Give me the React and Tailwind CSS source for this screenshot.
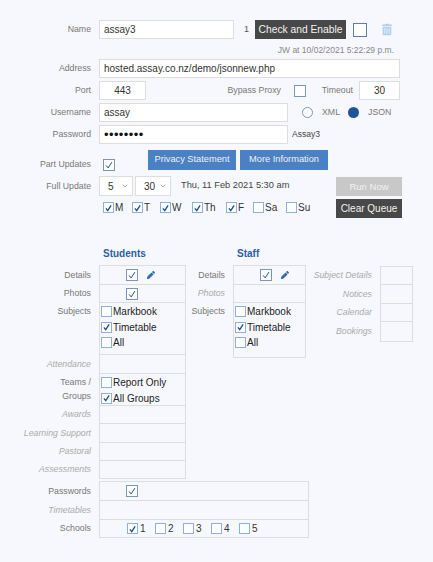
import { ChevronDown } from 'lucide-react';
import { FaPen, FaTrashAlt } from 'react-icons/fa';

const Check = ({ on = false, plain = false, className = '' }) => (
  <span
    className={`inline-flex shrink-0 items-center justify-center bg-white border ${
      plain ? 'w-[12px] h-[12px] border-[#7d94b5]' : 'w-[11px] h-[11px] border-[#8fb0dc]'
    } ${className}`}
  >
    {on && (
      <svg viewBox="0 0 12 12" className="w-[10px] h-[10px]" fill="none" stroke="#1f4f8a" strokeWidth={plain ? 1.2 : 1.8}>
        <path d="M2.5 6.5 L5 9.5 L9.5 2.5" />
      </svg>
    )}
  </span>
);

const Label = ({ children, muted, className = 'w-[91px]' }) => (
  <div className={`shrink-0 text-right text-[8.75px] ${muted ? 'italic text-[#aaaaaa]' : 'text-[#777777]'} ${className}`}>
    {children}
  </div>
);

const Input = ({ value, className = '', center }) => (
  <div className={`h-[19px] flex items-center bg-white border border-[#dddddd] text-[10px] text-[#333333] ${center ? 'justify-center' : 'px-[4px]'} ${className}`}>
    {value}
  </div>
);

const Button = ({ children, className = '' }) => (
  <button className={`flex items-center justify-center text-[#f2f2f2] ${className}`}>{children}</button>
);

const Select = ({ value, className }) => (
  <div className={`h-[20px] flex items-center justify-between pl-[8px] pr-[3px] bg-white border border-[#dddddd] text-[10px] text-[#333333] ${className}`}>
    {value}
    <ChevronDown className="w-[8px] h-[8px] text-[#777777]" />
  </div>
);

const Day = ({ label, on, className }) => (
  <div className={`flex items-center gap-[1px] text-[10px] text-[#333333] ${className}`}>
    <Check on={on} />
    {label}
  </div>
);

const CheckLine = ({ label, on }) => (
  <div className="h-[15.5px] flex items-center gap-[1px] text-[10px] text-[#222222]">
    <Check on={on} />
    {label}
  </div>
);

// one labelled row of a permissions table, rows share their border
const PermRow = ({ label, muted, h = 'h-[18px]', width, labelWidth, top, children }) => (
  <div className="flex items-start -mb-px">
    <div className={`${h} ${labelWidth} shrink-0 flex ${top ? 'items-start pt-[2px] leading-[14px]' : 'items-center'} justify-end`}>
      <Label muted={muted} className="w-auto">{label}</Label>
    </div>
    <div className={`${h} ${width} ml-[8px] shrink-0 border border-[#dddddd] ${top ? 'pl-[1px] pt-[1px]' : 'flex items-center'}`}>
      {children}
    </div>
  </div>
);

const DetailsCell = ({ pen }) => (
  <>
    <Check on plain className="ml-[26px]" />
    {pen && <FaPen className="ml-[9px] w-[8px] h-[8px] text-[#2e6db4]" />}
  </>
);

export default function App() {
  return (
    <div className="w-[433px] h-[562px] overflow-hidden bg-[#f7f8fd] pt-[20px] text-[10px] font-['Liberation_Sans',sans-serif]">
      <div className="flex items-center">
        <Label>Name</Label>
        <Input value="assay3" className="ml-[8px] w-[135px]" />
        <span className="ml-[10px] w-[5px] text-[9px] text-[#555555]">1</span>
        <Button className="ml-[6px] w-[91px] h-[19px] bg-[#484848] text-[10.25px]">Check and Enable</Button>
        <span className="ml-[7px] w-[14px] h-[14px] bg-white border border-[#5e7ea6]" />
        <FaTrashAlt className="ml-[15px] w-[10px] h-[13px] text-[#b4cfee]" />
      </div>
      <div className="mt-[5px] mr-[39px] h-[12px] text-right text-[8.5px] leading-[12px] text-[#888888]">JW at 10/02/2021 5:22:29 p.m.</div>

      <div className="mt-[3px] flex items-center">
        <Label>Address</Label>
        <Input value="hosted.assay.co.nz/demo/jsonnew.php" className="ml-[8px] w-[301px]" />
      </div>

      <div className="mt-[3px] flex items-center">
        <Label>Port</Label>
        <Input value="443" center className="ml-[8px] w-[47px]" />
        <Label className="w-[135px]">Bypass Proxy</Label>
        <Check plain className="ml-[13px]" />
        <Label className="ml-[15px] w-[32px]">Timeout</Label>
        <Input value="30" center className="ml-[6px] w-[41px]" />
      </div>

      <div className="mt-[3px] flex items-center">
        <Label>Username</Label>
        <Input value="assay" className="ml-[8px] w-[189px]" />
        <span className="ml-[14px] w-[11px] h-[11px] rounded-full bg-white border border-[#7d94b5]" />
        <Label className="ml-[9px] w-[16px]">XML</Label>
        <span className="ml-[10px] w-[11px] h-[11px] rounded-full bg-[#1f5596]" />
        <Label className="ml-[9px] w-[21px]">JSON</Label>
      </div>

      <div className="mt-[3px] flex items-center">
        <Label>Password</Label>
        <Input value="••••••••" className="ml-[8px] w-[189px] !text-[13px] tracking-[0.4px] !text-[#111111]" />
        <span className="ml-[4px] text-[8.5px] text-[#444444]">Assay3</span>
      </div>

      <div className="mt-[6px] flex items-start">
        <div className="mt-[8px] flex items-center">
          <Label>Part Updates</Label>
          <Check on plain className="ml-[12px]" />
        </div>
        <Button className="ml-[33px] w-[88px] h-[20px] bg-[#4a80c4] text-[9.25px]">Privacy Statement</Button>
        <Button className="ml-[4px] w-[88px] h-[20px] bg-[#4a80c4] text-[9.25px]">More Information</Button>
      </div>

      <div className="mt-[5px] flex">
        <div className="w-[336px] shrink-0">
          <div className="flex items-center">
            <Label>Full Update</Label>
            <Select value="5" className="ml-[8px] w-[34px]" />
            <Select value="30" className="ml-[2px] w-[36px]" />
            <span className="ml-[10px] text-[9.25px] text-[#444444]">Thu, 11 Feb 2021 5:30 am</span>
          </div>
          <div className="mt-[4px] ml-[103px] flex items-center">
            <Day label="M" on className="w-[29px]" />
            <Day label="T" on className="w-[28px]" />
            <Day label="W" on className="w-[32px]" />
            <Day label="Th" on className="w-[34px]" />
            <Day label="F" on className="w-[27px]" />
            <Day label="Sa" className="w-[33px]" />
            <Day label="Su" />
          </div>
        </div>
        <div className="pt-[1px] flex flex-col gap-[3px] shrink-0">
          <Button className="w-[66px] h-[19px] bg-[#c8c8c8] text-[9.5px]">Run Now</Button>
          <Button className="w-[66px] h-[19px] bg-[#484848] text-[10px]">Clear Queue</Button>
        </div>
      </div>

      <div className="mt-[28px] flex items-start">
        <div className="w-[187px] shrink-0">
          <div className="h-[19px] ml-[103px] font-bold text-[10px] text-[#2b5ea8]">Students</div>
          <PermRow label="Details" labelWidth="w-[91px]" width="w-[87px]" h="h-[20px]"><DetailsCell pen /></PermRow>
          <PermRow label="Photos" labelWidth="w-[91px]" width="w-[87px]" h="h-[19px]"><DetailsCell /></PermRow>
          <PermRow label="Subjects" labelWidth="w-[91px]" width="w-[87px]" h="h-[53px]" top>
            <CheckLine label="Markbook" />
            <CheckLine label="Timetable" on />
            <CheckLine label="All" />
          </PermRow>
          <PermRow label="Attendance" muted labelWidth="w-[91px]" width="w-[87px]" h="h-[20px]" />
          <PermRow label={<>Teams /<br />Groups</>} labelWidth="w-[91px]" width="w-[87px]" h="h-[33px]" top>
            <CheckLine label="Report Only" />
            <CheckLine label="All Groups" on />
          </PermRow>
          <PermRow label="Awards" muted labelWidth="w-[91px]" width="w-[87px]" h="h-[19px]" />
          <PermRow label="Learning Support" muted labelWidth="w-[91px]" width="w-[87px]" h="h-[20px]" />
          <PermRow label="Pastoral" muted labelWidth="w-[91px]" width="w-[87px]" h="h-[19px]" />
          <PermRow label="Assessments" muted labelWidth="w-[91px]" width="w-[87px]" h="h-[19px]" />
        </div>
        <div className="w-[120px] shrink-0">
          <div className="h-[19px] ml-[50px] font-bold text-[10px] text-[#2b5ea8]">Staff</div>
          <PermRow label="Details" labelWidth="w-[38px]" width="w-[73px]" h="h-[20px]"><DetailsCell pen /></PermRow>
          <PermRow label="Photos" muted labelWidth="w-[38px]" width="w-[73px]" h="h-[19px]" />
          <PermRow label="Subjects" labelWidth="w-[38px]" width="w-[73px]" h="h-[56px]" top>
            <CheckLine label="Markbook" />
            <CheckLine label="Timetable" on />
            <CheckLine label="All" />
          </PermRow>
        </div>
        <div className="shrink-0 pt-[20px]">
          <PermRow label="Subject Details" muted labelWidth="w-[65px]" width="w-[33px]" h="h-[19px]" />
          <PermRow label="Notices" muted labelWidth="w-[65px]" width="w-[33px]" h="h-[20px]" />
          <PermRow label="Calendar" muted labelWidth="w-[65px]" width="w-[33px]" h="h-[19px]" />
          <PermRow label="Bookings" muted labelWidth="w-[65px]" width="w-[33px]" h="h-[21px]" />
        </div>
      </div>

      <div className="mt-[3px]">
        <PermRow label="Passwords" labelWidth="w-[91px]" width="w-[210px]" h="h-[20px]"><DetailsCell /></PermRow>
        <PermRow label="Timetables" muted labelWidth="w-[91px]" width="w-[210px]" h="h-[20px]" />
        <PermRow label="Schools" labelWidth="w-[91px]" width="w-[210px]" h="h-[19px]">
          <div className="ml-[27px] flex items-center">
            <Day label="1" on className="w-[28px] gap-[2px]" />
            <Day label="2" className="w-[28px] gap-[2px]" />
            <Day label="3" className="w-[28px] gap-[2px]" />
            <Day label="4" className="w-[28px] gap-[2px]" />
            <Day label="5" className="gap-[2px]" />
          </div>
        </PermRow>
      </div>
    </div>
  );
}
